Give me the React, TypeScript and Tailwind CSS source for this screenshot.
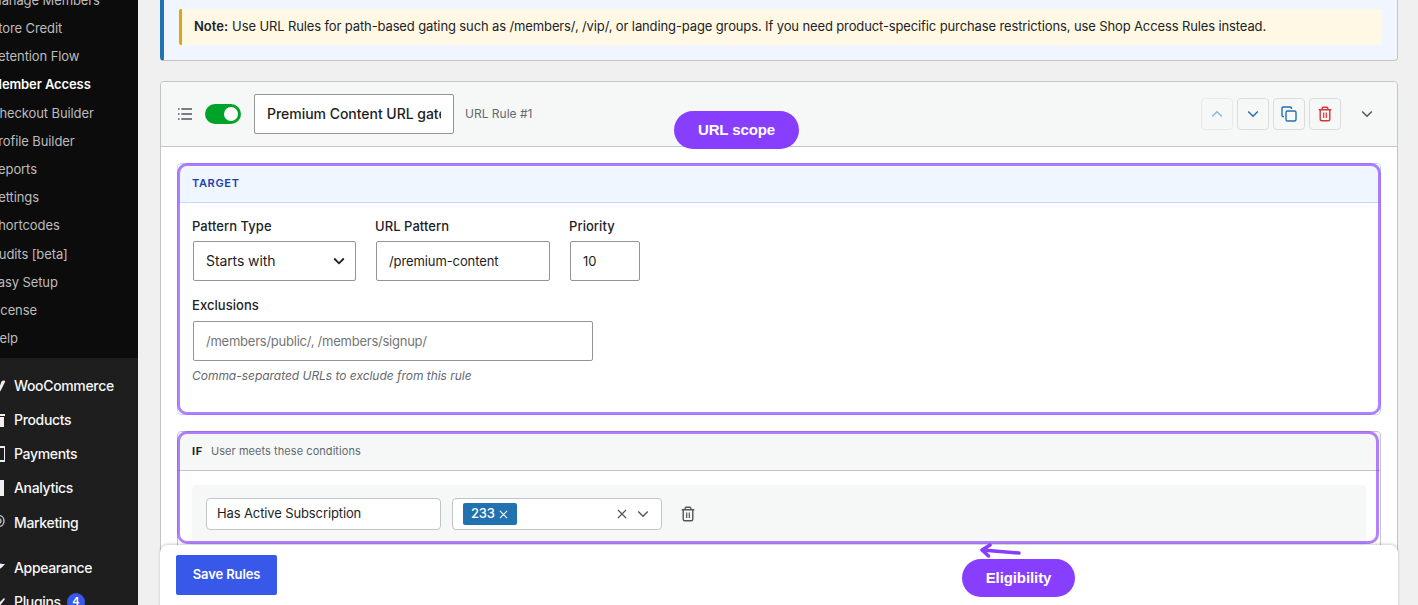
import React from 'react';

const SUBMENU = [
  'Manage Members', 'Store Credit', 'Retention Flow', 'Member Access', 'Checkout Builder',
  'Profile Builder', 'Reports', 'Settings', 'Shortcodes', 'Audits [beta]', 'Easy Setup', 'License', 'Help',
];

const MENU = ['WooCommerce', 'Products', 'Payments', 'Analytics', 'Marketing'];

function MenuIcon({ name }: { name: string }) {
  return (
    <svg width="20" height="20" viewBox="0 0 20 20" fill="#f0f0f1" className="shrink-0">
      {name === 'WooCommerce' && <path d="M20.500 5c-1.500 3-3 6-5 10-1 1-3 0-3.600-1l2.200-2.200L16.500 5.500q2-1.500 4-.5Z" />}
      {name === 'Products' && <path d="M4 4h16v2H4zM5 7h14v10H5z" />}
      {name === 'Payments' && <path d="M3 2h16q2 0 2 2v12q0 2-2 2H3v-2h16V4H3z" />}
      {name === 'Analytics' && <path d="M12 2h7v16h-7z" />}
      {name === 'Marketing' && (
        <g fill="none" stroke="#c3c4c7" strokeWidth="1.400">
          <path d="M14 2.500c3 0 5 2.500 5 5.500s-2 5.500-5 5.500" />
          <path d="M14 5.500c1.500.5 2 1.500 2 2.500s-.5 2-2 2.500" />
        </g>
      )}
      {name === 'Appearance' && <path d="M12 4c3 2 5 2 8 2-2 2-5 6-8 6z" />}
      {name === 'Plugins' && <path d="m19 6-7 7 2 2 6-8z" />}
    </svg>
  );
}

function MenuItem({ name, badge }: { name: string; badge?: string }) {
  return (
    <li className="flex h-[34.2px] items-center gap-[9px] text-sm font-[450] tracking-[-0.34px] text-[#f6f6f6]">
      <MenuIcon name={name} />
      <span className="whitespace-nowrap">{name}</span>
      {badge && (
        <span className="-ml-[3px] flex h-[18px] w-[18px] items-center justify-center rounded-full bg-[#3858e9] text-[11px] font-semibold text-white">{badge}</span>
      )}
    </li>
  );
}

function Sidebar() {
  return (
    <aside className="h-full w-[138px] shrink-0 overflow-hidden bg-[#1e1e1e]">
      <ul className="-mt-[14px] h-[372px] bg-[#0c0c0c] pt-[0.5px]">
        {SUBMENU.map(item => (
          <li
            key={item}
            className={`-ml-[10px] flex h-[28.2px] items-center whitespace-nowrap text-[13px] tracking-[-0.1px] ${
              item === 'Member Access' ? 'font-semibold text-white' : 'text-[#bcbcbc]'
            }`}
          >
            {item}
          </li>
        ))}
      </ul>
      <ul className="-ml-[15px] pt-[10.8px]">
        {MENU.map(item => <MenuItem key={item} name={item} />)}
      </ul>
      <ul className="-ml-[15px] pt-[11px]">
        <MenuItem name="Appearance" />
        <MenuItem name="Plugins" badge="4" />
      </ul>
    </aside>
  );
}

function Chevron({ up, size = 12, width = 1.5 }: { up?: boolean; size?: number; width?: number }) {
  return (
    <svg width={size} height={size} viewBox="0 0 12 12" fill="none" stroke="currentColor" strokeWidth={width}>
      <path d={up ? 'M1.200 8.500 6 3.700l4.800 4.800' : 'M1.200 3.500 6 8.300l4.800-4.800'} />
    </svg>
  );
}

function Trash() {
  return (
    <svg width="14" height="16" viewBox="0 0 14 16" fill="none" stroke="currentColor" strokeWidth="1.400">
      <path d="M.7 3.700h12.600M4.200 3.500V2.200q0-1 1-1h3.600q1 0 1 1v1.300M2.200 3.700v9.600q0 1.500 1.500 1.500h6.600q1.500 0 1.500-1.500V3.700" />
      <path d="M5.700 6.500v5.500M8.300 6.500v5.500" strokeWidth="1.200" />
    </svg>
  );
}

function Cross({ size }: { size: number }) {
  return (
    <svg width={size} height={size} viewBox="0 0 10 10" fill="none" stroke="currentColor" strokeWidth="1.200">
      <path d="m1 1 8 8M9 1 1 9" />
    </svg>
  );
}

function RuleHeader() {
  const button = 'flex h-8 w-8 items-center justify-center rounded border border-[#dcdcde]';
  return (
    <div className="flex h-[65px] items-center rounded-t border-b border-[#c3c4c7] bg-[#f6f7f7] pr-[14px] pl-[17px]">
      <svg width="14" height="12" viewBox="0 0 14 12" fill="#50575e">
        <path d="M0 .3h1.500v1.400H0zM3.300.3H14v1.400H3.300zM0 5.300h1.500v1.400H0zM3.300 5.300H14v1.400H3.300zM0 10.300h1.500v1.400H0zM3.300 10.300H14v1.400H3.300z" />
      </svg>
      <div className="ml-[13px] flex h-5 w-9 items-center justify-end rounded-full bg-[#00a32a] pr-[3px]">
        <div className="h-[14px] w-[14px] rounded-full bg-white" />
      </div>
      <div className="ml-[13px] flex h-10 w-[200px] items-center rounded-[2px] border border-[#949494] bg-white px-3">
        <span className="overflow-hidden text-sm font-medium tracking-[-0.03px] whitespace-nowrap text-[#1e1e1e]">Premium Content URL gate</span>
      </div>
      <span className="ml-[11px] text-[12px] text-[#646970]">URL Rule #1</span>
      <div className="ml-auto flex items-center gap-1 text-[#2271b1]">
        <div className={`${button} opacity-50`}><Chevron up width={1.3} /></div>
        <div className={button}><Chevron /></div>
        <div className={button}>
          <svg width="16" height="16" viewBox="0 0 16 16" fill="none" stroke="currentColor" strokeWidth="1.400">
            <rect x="5" y="5" width="10" height="10" rx="1.500" />
            <path d="M3 10.500H2.200Q1 10.500 1 9.300V2.200Q1 1 2.200 1h7.100q1.200 0 1.200 1.200V3" />
          </svg>
        </div>
        <div className={`${button} text-[#d63638]`}><Trash /></div>
        <div className="ml-[6px] flex h-8 w-8 items-center justify-center text-[#50575e]"><Chevron /></div>
      </div>
    </div>
  );
}

function Field({ label, className, children }: { label: string; className: string; children: React.ReactNode }) {
  return (
    <div>
      <div className="text-[13px] leading-[14px] font-medium tracking-[0.05px] text-[#1d2327]">{label}</div>
      <div className={`mx-px mt-2 flex h-10 items-center rounded-[2px] border border-[#949494] bg-white px-3 text-[#1e1e1e] ${className}`}>
        {children}
      </div>
    </div>
  );
}

function TargetPanel() {
  return (
    <section className="relative h-[252px] rounded border border-[#bfdbfe] bg-white">
      <div className="flex h-[39px] items-center rounded-t border-b border-[#bfdbfe] bg-[#eff6ff] px-[14px] text-[11px] font-semibold tracking-[0.65px] text-[#1e40af]">
        TARGET
      </div>
      <div className="px-[14px] pt-4">
        <div className="flex gap-[18px]">
          <Field label="Pattern Type" className="w-[163px] justify-between pr-[10px] text-sm tracking-[-0.1px]">
            Starts with
            <Chevron width={1.8} />
          </Field>
          <Field label="URL Pattern" className="w-[174px] pt-[2px] text-[13px] tracking-[-0.1px]">/premium-content</Field>
          <Field label="Priority" className="w-[70px] pt-[2px] text-[13px]">10</Field>
        </div>
        <div className="mt-[17px]">
          <Field label="Exclusions" className="mt-[9px] w-[400px] pt-[2px] text-[13px] tracking-[-0.24px] text-[#757575]">/members/public/, /members/signup/</Field>
        </div>
        <p className="mt-[7px] text-[12px] leading-4 tracking-[-0.03px] text-[#646970] italic">Comma-separated URLs to exclude from this rule</p>
      </div>
      <div className="absolute -inset-px rounded-[10px] border-[3px] border-[#873eff]/65" />
    </section>
  );
}

function ConditionsPanel() {
  return (
    <section className="relative mt-4 h-[200px] rounded border border-[#c3c4c7] bg-white">
      <div className="flex h-[39px] items-center gap-2 rounded-t border-b border-[#c3c4c7] bg-[#f6f7f7] px-[14px]">
        <span className="text-[11px] font-bold tracking-[0.7px] text-[#1d2327]">IF</span>
        <span className="text-[11px] tracking-[0.06px] text-[#646970]">User meets these conditions</span>
      </div>
      <div className="mx-[14px] mt-[14px] flex h-[90px] items-start rounded bg-[#f6f7f7] px-[14px] pt-[13px]">
        <div className="flex h-8 w-[235px] items-center rounded border border-[#c3c4c7] bg-white px-[10px] text-[13px] tracking-[-0.12px] text-[#1e1e1e]">
          Has Active Subscription
        </div>
        <div className="ml-[11px] flex h-8 w-[210px] items-center rounded border border-[#c3c4c7] bg-white pr-3 pl-[10px] text-[#50575e]">
          <span className="flex h-[22px] w-[54px] items-center gap-1 rounded-[2px] bg-[#2271b1] pl-2 text-[13px] font-medium tracking-[-0.2px] text-white">
            233
            <Cross size={9} />
          </span>
          <span className="ml-auto"><Cross size={10} /></span>
          <span className="ml-[10px]"><Chevron width={1.4} /></span>
        </div>
        <div className="ml-[19px] flex h-8 items-center text-[#50575e]"><Trash /></div>
      </div>
      <div className="absolute -top-px right-[1px] -left-px h-[113px] rounded-[10px] border-[3px] border-[#873eff]/65" />
    </section>
  );
}

function Label({ children, className }: { children: React.ReactNode; className: string }) {
  return (
    <div className={`absolute flex h-[38px] items-center justify-center rounded-full bg-[#873eff] font-['Liberation_Sans',sans-serif] text-[15px] font-bold tracking-[-0.1px] text-white ${className}`}>
      {children}
    </div>
  );
}

export default function App() {
  return (
    <div className="relative flex h-[605px] w-[1418px] overflow-hidden bg-[#f0f0f0] font-[Inter,sans-serif]">
      <Sidebar />
      <main className="flex-1 pr-5 pl-[22px]">
        <div className="h-[61px] rounded-b border-r border-b border-l-4 border-[#c3c4c7] border-l-[#2271b1] bg-[#f0f5ff] px-[15px] pt-[9px]">
          <p className="flex h-9 items-center gap-1 rounded-[2px] border-l-[3px] border-[#dba617] bg-[#fff8e5] pl-3 text-[13px] whitespace-nowrap text-[#1d2327]">
            <strong className="font-semibold">Note:</strong>
            <span className="tracking-[-0.122px]">Use URL Rules for path-based gating such as /members/, /vip/, or landing-page groups. If you need product-specific purchase restrictions, use Shop Access Rules instead.</span>
          </p>
        </div>
        <div className="mt-5 h-[600px] rounded border border-[#c3c4c7] bg-white">
          <RuleHeader />
          <div className="p-4">
            <TargetPanel />
            <ConditionsPanel />
          </div>
        </div>
      </main>

      <footer className="absolute top-[545px] right-5 left-[160px] h-[70px] rounded-t-lg bg-white px-4 pt-[10px] shadow-[0_-1px_3px_rgba(0,0,0,0.2)]">
        <button className="h-10 w-[101px] rounded-[2px] bg-[#3858e9] text-[13px] font-semibold tracking-[-0.1px] text-white">Save Rules</button>
      </footer>

      <Label className="top-[111px] left-[674px] w-[125px]">URL scope</Label>
      <svg className="absolute top-[540px] left-[977px]" width="48" height="20" viewBox="0 0 48 20" fill="none" stroke="#873eff" strokeWidth="3.500" strokeLinecap="round" strokeLinejoin="round">
        <path d="M42 13 5 10M13 5 5 10l6.500 6" />
      </svg>
      <Label className="top-[559px] left-[962px] w-[113px]">Eligibility</Label>
    </div>
  );
}
